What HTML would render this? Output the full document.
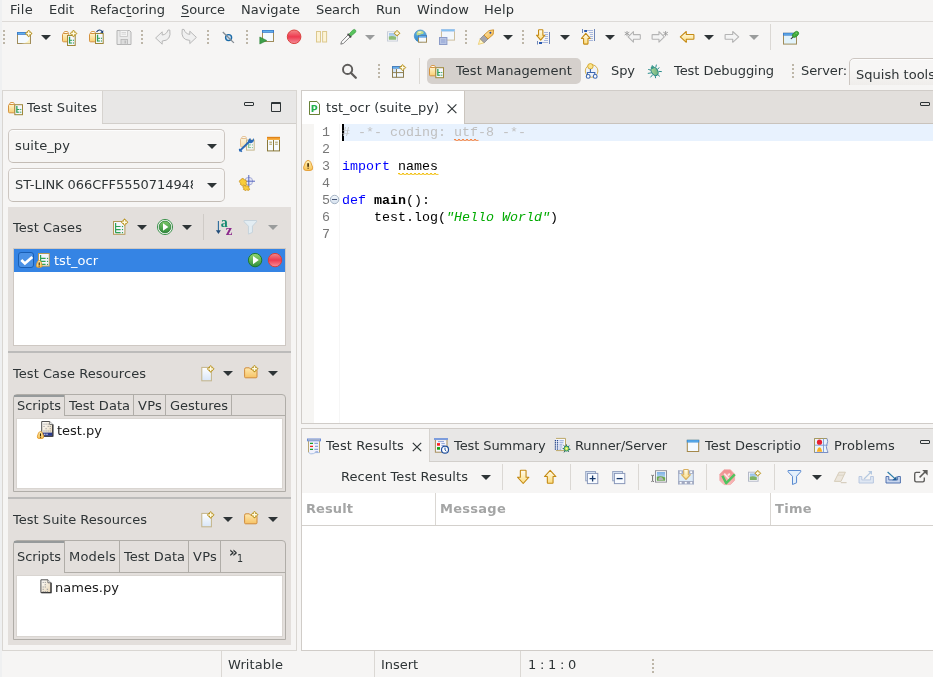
<!DOCTYPE html><html><head>
<meta charset="utf-8">
<title>Squish IDE</title>
<style>
*{box-sizing:border-box;margin:0;padding:0}
html,body{width:933px;height:677px;overflow:hidden;background:#f6f5f4}
body{position:relative;font-family:"DejaVu Sans","Liberation Sans",sans-serif;font-size:13px;color:#2e3436;line-height:16px}
.a{position:absolute}
.t{position:absolute;white-space:nowrap;line-height:16px;height:16px}
.b{font-weight:bold}
svg{position:absolute;overflow:visible}
.ic{position:absolute;width:16px;height:16px}
.mono{font-family:"Liberation Mono","DejaVu Sans Mono",monospace;font-size:13.33px;position:absolute;white-space:pre;line-height:17px;height:17px}
.arr{position:absolute;width:0;height:0;border-left:5px solid transparent;border-right:5px solid transparent;border-top:5px solid #2e3436}
.arr.dis{border-top-color:#9a9c9c}
.dsep{position:absolute;width:2px;background:repeating-linear-gradient(to bottom,#bdb6a8 0,#bdb6a8 2px,transparent 2px,transparent 4px)}
.vsep{position:absolute;width:1px;background:#dbd8d4}
u{text-decoration:underline;text-underline-offset:2px;text-decoration-thickness:1px}
.sec{position:absolute;left:8px;width:283px;background:#e3dfdc}
.tabbar{position:absolute;background:#e8e7e6;border-bottom:1px solid #d2cfcb}
</style>
</head>
<body>
<div id="root" style="position:absolute;left:0;top:0;width:933px;height:677px;will-change:transform">
<!-- MENUBAR -->
<div class="a" id="menubar" style="left:0;top:0;width:933px;height:22px;border-bottom:1px solid #dddad7"></div>
<div class="t" style="left: 10px; top: 2px; letter-spacing: 0.309px;">File</div>
<div class="t" style="left: 49px; top: 2px; letter-spacing: -0.047px;">Edit</div>
<div class="t" style="left: 90px; top: 2px; letter-spacing: 0.031px;">Refac<u>t</u>oring</div>
<div class="t" style="left: 181px; top: 2px; letter-spacing: -0.112px;"><u>S</u>ource</div>
<div class="t" style="left: 241px; top: 2px; letter-spacing: 0.086px;">Navigate</div>
<div class="t" style="left: 316px; top: 2px; letter-spacing: -0.112px;">Search</div>
<div class="t" style="left: 376px; top: 2px; letter-spacing: 0.021px;">Run</div>
<div class="t" style="left: 417px; top: 2px; letter-spacing: 0.122px;">Window</div>
<div class="t" style="left: 484px; top: 2px; letter-spacing: 0.09px;">Help</div>
<div class="a" style="left:0;top:0;width:2px;height:677px;background:#eff0f1"></div>

<!-- TOOLBAR1 -->
<div id="tb1">
<div class="dsep" style="left:3px;top:30px;height:15px"></div>
<div class="arr" style="left:41px;top:35px"></div>
<div class="dsep" style="left:141px;top:30px;height:15px"></div>
<div class="dsep" style="left:207px;top:30px;height:15px"></div>
<div class="dsep" style="left:246px;top:30px;height:15px"></div>
<div class="arr dis" style="left:365px;top:35px"></div>
<div class="dsep" style="left:465px;top:30px;height:15px"></div>
<div class="arr" style="left:503px;top:35px"></div>
<div class="dsep" style="left:522px;top:30px;height:15px"></div>
<div class="arr" style="left:560px;top:35px"></div>
<div class="arr" style="left:605px;top:35px"></div>
<div class="arr" style="left:704px;top:35px"></div>
<div class="arr dis" style="left:749px;top:35px"></div>
<div class="vsep" style="left:770px;top:24px;height:26px"></div>
<svg style="left:16px;top:29px" width="16" height="16" viewBox="0 0 16 16"><rect x="1.5" y="3.5" width="13" height="11" fill="#f4faff" stroke="#a08c5a"></rect><rect x="1" y="3" width="14" height="2.8" fill="#3a7ccc"></rect><rect x="2" y="3.8" width="12" height="1.1" fill="#6cc0f6" opacity=".85"></rect><path d="M14 8 q-1 6 -9 6.5 h9z" fill="#fbedb8" opacity=".9"></path><path d="M12.7 1.0999999999999996 L16.1 4.5 L12.7 7.9 L9.299999999999999 4.5Z" fill="#b8921e" stroke="#b8921e" stroke-width=".6" stroke-linejoin="round"></path><path d="M12.7 2.1999999999999997 V6.800000000000001 M10.399999999999999 4.5 H15.000000000000002" stroke="#fffbe4" stroke-width="1.45" fill="none"></path></svg>
<svg style="left:61px;top:29px" width="16" height="16" viewBox="0 0 16 16"><defs><linearGradient id="g2" x1="0" y1="0" x2="0" y2="1"><stop offset="0" stop-color="#fff3cc"></stop><stop offset="1" stop-color="#f8cf72"></stop></linearGradient></defs><g><path d="M2.5 4.6 L3 3 Q3.2 2.5 3.8 2.5 H6.2 Q6.8 2.5 7 3 L7.4 4.6Z" fill="#fffaf0" stroke="#d4923e" stroke-width=".9" stroke-linejoin="round"></path><rect x="1.5" y="4.5" width="6.200" height="8.300" rx="1" fill="url(#g2)" stroke="#d4923e"></rect><rect x="6.5" y="6.5" width="7.700" height="10" fill="#f6f6fd" stroke="#9e8838"></rect><path d="M8.55 7.7 v6.800" stroke="#2fa256" stroke-width="1.300" fill="none"></path><path d="M8.55 11.3 h2.500 M8.55 14 h2.500" stroke="#2fa256" stroke-width="1" fill="none"></path><rect x="11.9" y="10.75" width="1.100" height="1.100" fill="#2fa256"></rect><rect x="11.9" y="13.45" width="1.100" height="1.100" fill="#2fa256"></rect></g><path d="M12.5 1.0999999999999996 L15.9 4.5 L12.5 7.9 L9.1 4.5Z" fill="#b8921e" stroke="#b8921e" stroke-width=".6" stroke-linejoin="round"></path><path d="M12.5 2.1999999999999997 V6.800000000000001 M10.2 4.5 H14.8" stroke="#fffbe4" stroke-width="1.45" fill="none"></path></svg>
<svg style="left:88px;top:29px" width="16" height="16" viewBox="0 0 16 16"><defs><linearGradient id="g3" x1="0" y1="0" x2="0" y2="1"><stop offset="0" stop-color="#fff3cc"></stop><stop offset="1" stop-color="#f8cf72"></stop></linearGradient></defs><g><path d="M2.5 4.6 L3 3 Q3.2 2.5 3.8 2.5 H6.2 Q6.8 2.5 7 3 L7.4 4.6Z" fill="#fffaf0" stroke="#d4923e" stroke-width=".9" stroke-linejoin="round"></path><rect x="1.5" y="4.5" width="6.200" height="8.300" rx="1" fill="url(#g3)" stroke="#d4923e"></rect><rect x="7.5" y="4.5" width="7.700" height="10" fill="#f6f6fd" stroke="#9e8838"></rect><path d="M9.55 5.7 v6.800" stroke="#2fa256" stroke-width="1.300" fill="none"></path><path d="M9.55 9.3 h2.500 M9.55 12 h2.500" stroke="#2fa256" stroke-width="1" fill="none"></path><rect x="12.9" y="8.75" width="1.100" height="1.100" fill="#2fa256"></rect><rect x="12.9" y="11.45" width="1.100" height="1.100" fill="#2fa256"></rect></g><path d="M8.500 3 q3 -3.800 5.800 -.4" fill="none" stroke="#1c3f78" stroke-width="1.200"></path><path d="M15.400 1.200 l-.3 3 l-2.900 -.6z" fill="#1c3f78"></path></svg>
<svg style="left:116px;top:29px" width="16" height="16" viewBox="0 0 16 16"><path d="M1 1.5 H13.5 L15 3 V15.5 H1Z" fill="#e9e9e9" stroke="#b4b4b4" stroke-linejoin="round"></path><rect x="4" y="1.5" width="7.5" height="6" fill="#f4f4f4" stroke="#c4c4c4" stroke-width=".8"></rect><path d="M5.5 3.5h4.5M5.5 5.2h4.5" stroke="#cfcfcf" stroke-width=".8"></path><rect x="5" y="10.5" width="6.5" height="5" fill="#dcdcdc" stroke="#b4b4b4" stroke-width=".8"></rect><rect x="8.5" y="11.5" width="1.5" height="3" fill="#bdbdbd"></rect></svg>
<svg style="left:155px;top:29px" width="16" height="16" viewBox="0 0 16 16"><path d="M.6 9 L7.2 2.8 V6 Q11.6 5.6 13 1 L14.8 1 Q16.6 11.6 7.2 12 V15.2Z" fill="#f0f0f0" stroke="#b7b7b7" stroke-linejoin="round"></path></svg>
<svg style="left:181px;top:29px" width="16" height="16" viewBox="0 0 16 16"><path d="M15.4 8.4 L8.8 2.2 V5.400 Q4.400 5 3 .4 L1.200 .4 Q-.6 11 8.800 11.400 V14.600Z" fill="#f0f0f0" stroke="#b7b7b7" stroke-linejoin="round"></path></svg>
<svg style="left:220px;top:29px" width="16" height="16" viewBox="0 0 16 16"><circle cx="8.6" cy="8.6" r="3" fill="#cfe2f2" stroke="#1b6aa6" stroke-width="1.400"></circle><path d="M2.8 3 L13.9 13.9" stroke="#848c94" stroke-width="1.300"></path></svg>
<svg style="left:259px;top:29px" width="16" height="16" viewBox="0 0 16 16"><rect x="3.5" y="1.5" width="11" height="11" fill="#f4faff" stroke="#a08c5a"></rect><rect x="3" y="1" width="12" height="2.8" fill="#3a7ccc"></rect><rect x="4" y="1.8" width="10" height="1.1" fill="#6cc0f6" opacity=".85"></rect><path d="M.8 8 V15 L7.8 11.5Z" fill="#3f9f4a" stroke="#2c8438" stroke-width=".6" stroke-linejoin="round"></path></svg>
<svg style="left:286px;top:29px" width="16" height="16" viewBox="0 0 16 16"><defs><linearGradient id="g4" x1="0" y1="0" x2="0" y2="1"><stop offset="0" stop-color="#f28a8a"></stop><stop offset="0.5" stop-color="#ee3a50"></stop><stop offset="1" stop-color="#f4909a"></stop></linearGradient></defs><circle cx="8.1" cy="7.8" r="6.8" fill="url(#g4)" stroke="#d8403c"></circle></svg>
<svg style="left:314px;top:29px" width="16" height="16" viewBox="0 0 16 16"><rect x="2.5" y="2.5" width="4" height="10.5" fill="#fcf3d6" stroke="#dcc88e"></rect><rect x="8.6" y="2.5" width="4" height="10.5" fill="#fcf3d6" stroke="#dcc88e"></rect></svg>
<svg style="left:340px;top:29px" width="16" height="16" viewBox="0 0 16 16"><path d="M.8 15.2 L1.6 12.6 L8.6 5.4 L10.6 7.4 L3.4 14.4Z" fill="#fff" stroke="#5e5e5e" stroke-width=".8" stroke-linejoin="round"></path><path d="M7.6 4.800 L11.200 8.400" stroke="#444" stroke-width="1.500"></path><path d="M9.2 5 L12.6 1.2 Q14.6 -.4 15.6 1.2 Q16.4 2.6 14.8 4 L11 7Z" fill="#58c45c" stroke="#3a9a40" stroke-width=".7"></path></svg>
<svg style="left:386px;top:29px" width="16" height="16" viewBox="0 0 16 16"><defs><linearGradient id="g5" x1="0" y1="0" x2="0" y2="1"><stop offset="0" stop-color="#7cb0e4"></stop><stop offset="1" stop-color="#dcecf6"></stop></linearGradient></defs><g opacity="0.75"><rect x="1.5" y="2.8" width="10" height="9.2" fill="#fff" stroke="#b9bfd0"></rect><rect x="2.8" y="4.1" width="7.4" height="6.6" fill="url(#g5)"></rect><path d="M2.8 10.7 v-3.264 q3.3 -1.224 7.4 0.51 v2.754z" fill="#6aa84a"></path></g><path d="M11 1.2000000000000002 L14.0 4.2 L11 7.2 L8.0 4.2Z" fill="#b8921e" stroke="#b8921e" stroke-width=".6" stroke-linejoin="round"></path><path d="M11 2.3000000000000003 V6.1 M9.1 4.2 H12.9" stroke="#fffbe4" stroke-width="1.45" fill="none"></path></svg>
<svg style="left:413px;top:29px" width="16" height="16" viewBox="0 0 16 16"><defs><linearGradient id="g6" x1="0" y1="0" x2="0" y2="1"><stop offset="0" stop-color="#62b4e4"></stop><stop offset="1" stop-color="#2e86c8"></stop></linearGradient></defs><circle cx="7.300" cy="7" r="6" fill="url(#g6)" stroke="#3a86c4" stroke-width=".7"></circle><path d="M4.500 2.400 q3 -1.600 6 .4 q.8 1.400 -.6 2.200 q-2 -.4 -3 1 q-2.400 1.200 -3.400 -.6 q-.2 -1.800 1 -3z" fill="#bcd88a"></path><path d="M5.200 2.800 q2 -.8 3.600 0 q-1 1.200 -2.400 1.200 q-1.200 .6 -1.200 -1.200z" fill="#f2f2d0"></path><rect x="5.5" y="6.8" width="8" height="6.4" fill="#f4faff" stroke="#a08c5a"></rect><rect x="5" y="6.3" width="9" height="2.2" fill="#3a7ccc"></rect><rect x="6" y="7.1" width="7" height="0.9" fill="#6cc0f6" opacity=".85"></rect></svg>
<svg style="left:439px;top:29px" width="16" height="16" viewBox="0 0 16 16"><rect x="2.5" y="0.5" width="13" height="10.6" fill="#f3f8fc" stroke="#cdbf9e"></rect><rect x="2" y="0" width="14" height="2.6" fill="#a6c6ea"></rect><rect x="3" y="0.8" width="12" height="0.9" fill="#6cc0f6" opacity=".85"></rect><rect x=".5" y="8.5" width="7.4" height="7" fill="#b9c6e4" stroke="#8c9cc8"></rect><rect x="2" y="10" width="4.4" height="4" fill="#a5b4dc"></rect></svg>
<svg style="left:478px;top:29px" width="16" height="16" viewBox="0 0 16 16"><defs><linearGradient id="g7" x1="0" y1="0" x2="1" y2="1"><stop offset="0" stop-color="#ffedb4"></stop><stop offset="1" stop-color="#f4b040"></stop></linearGradient></defs><path d="M.4 15.4 L2.2 9.8 L6.2 13.8Z" fill="#fff7c8" stroke="#e8c050" stroke-width=".7"></path><path d="M2.2 9.8 L6 6 L10 10 L6.2 13.8Z" fill="#a4a4ac" stroke="#7c7c84" stroke-width=".7"></path><path d="M6 6 L11 1.6 L15.6 .8 L15.2 5.4 L10 10Z" fill="url(#g7)" stroke="#c8861a" stroke-width=".8" stroke-linejoin="round"></path><circle cx="12.4" cy="3.8" r="1" fill="#2a4a9a"></circle></svg>
<svg style="left:535px;top:29px" width="16" height="16" viewBox="0 0 16 16"><path d="M9 3.5h4M10 5.5h3M9.5 7.5h3.5M10 9.5h3M9 11.5h4M7 13.5h6" stroke="#a9b8dc" stroke-width="1"></path><path d="M14.5 3v12M2.5 12v3.5" stroke="#6f86b8" stroke-width="1"></path><rect x="4" y="13" width="3" height="2" fill="#2a5ab0"></rect><defs><linearGradient id="g8" x1="0" y1="0" x2="0" y2="1"><stop offset="0" stop-color="#fffdf0"></stop><stop offset="1" stop-color="#fcdc7c"></stop></linearGradient></defs><path d="M5.7 11.200000000000001 L1.5 6.228000000000001 H3.5380000000000003 V1.3 q0 -.5 .5 -.5 H7.362 q.5 0 .5 .5 V6.228000000000001 H9.9Z" fill="url(#g8)" stroke="#c48a14" stroke-width="1.1" stroke-linejoin="round"></path></svg>
<svg style="left:580px;top:29px" width="16" height="16" viewBox="0 0 16 16"><path d="M6 1.5h7M9 3.5h4M10 5.5h3M9.5 7.5h3.5M10 9.5h3M9 11.5h4" stroke="#a9b8dc" stroke-width="1"></path><path d="M14.5 0v12M2.5 0v4" stroke="#6f86b8" stroke-width="1"></path><rect x="4.2" y="1" width="2.8" height="2" fill="#2a5ab0"></rect><defs><linearGradient id="g9" x1="0" y1="0" x2="0" y2="1"><stop offset="0" stop-color="#fffdf0"></stop><stop offset="1" stop-color="#fcdc7c"></stop></linearGradient></defs><path d="M5.8 4.3 L1.5 9.463999999999999 H3.592 V14.600000000000001 q0 .5 .5 .5 H7.507999999999999 q.5 0 .5 -.5 V9.463999999999999 H10.1Z" fill="url(#g9)" stroke="#c48a14" stroke-width="1.1" stroke-linejoin="round"></path></svg>
<svg style="left:624px;top:29px" width="16" height="16" viewBox="0 0 16 16"><path d="M4.1 7.9 L9.450000000000001 2.7 V5.62 H15.8 q.5 0 .5 .5 V9.680000000000001 q0 .5 -.5 .5 H9.450000000000001 V13.100000000000001Z" fill="#f4f4f4" stroke="#b4b4b4" stroke-width="1.1" stroke-linejoin="round"></path><path d="M3 1.9999999999999996v5.2M0.7000000000000002 3.1999999999999997l4.6 2.8M0.7000000000000002 6.0l4.6 -2.8" stroke="#9c9c9c" stroke-width=".9"></path></svg>
<svg style="left:651px;top:29px" width="16" height="16" viewBox="0 0 16 16"><path d="M13.3 7.9 L7.95 2.7 V5.62 H1.6 q-.5 0 -.5 .5 V9.680000000000001 q0 .5 .5 .5 H7.95 V13.100000000000001Z" fill="#f4f4f4" stroke="#b4b4b4" stroke-width="1.1" stroke-linejoin="round"></path><path d="M14.6 1.9999999999999996v5.2M12.3 3.1999999999999997l4.6 2.8M12.3 6.0l4.6 -2.8" stroke="#9c9c9c" stroke-width=".9"></path></svg>
<svg style="left:679px;top:29px" width="16" height="16" viewBox="0 0 16 16"><defs><linearGradient id="g10" x1="0" y1="0" x2="0" y2="1"><stop offset="0" stop-color="#fffdf0"></stop><stop offset="1" stop-color="#fcdc7c"></stop></linearGradient></defs><path d="M1.3 7.9 L7.28 2.5 V5.54 H14.4 q.5 0 .5 .5 V9.760000000000002 q0 .5 -.5 .5 H7.28 V13.3Z" fill="url(#g10)" stroke="#c48a14" stroke-width="1.1" stroke-linejoin="round"></path></svg>
<svg style="left:724px;top:29px" width="16" height="16" viewBox="0 0 16 16"><path d="M14.700000000000001 7.9 L8.72 2.5 V5.54 H1.6 q-.5 0 -.5 .5 V9.760000000000002 q0 .5 .5 .5 H8.72 V13.3Z" fill="#f4f4f4" stroke="#b4b4b4" stroke-width="1.1" stroke-linejoin="round"></path></svg>
<svg style="left:783px;top:29px" width="16" height="16" viewBox="0 0 16 16"><rect x="0.5" y="4.3" width="13" height="10.8" fill="#e2f3fb" stroke="#a08c5a"></rect><rect x="0" y="3.8" width="14" height="2.8" fill="#3a7ccc"></rect><rect x="1" y="4.6" width="12" height="1.1" fill="#6cc0f6" opacity=".85"></rect><path d="M8.200 9.600 L10.200 7.900" stroke="#3a3a3a" stroke-width="1.100" stroke-linecap="round"></path><ellipse cx="12.500" cy="5.400" rx="3.700" ry="2.300" transform="rotate(-40 12.500 5.400)" fill="#3ea63a" stroke="#2f8a2c" stroke-width=".6"></ellipse><circle cx="13.400" cy="4.300" r="1" fill="#6cc85c"></circle><circle cx="11.500" cy="6" r=".9" fill="#58b848"></circle></svg>
</div>
<!-- TOOLBAR2 -->
<div id="tb2">
<div class="dsep" style="left:378px;top:64px;height:15px"></div>
<div class="vsep" style="left:419px;top:58px;height:26px"></div>
<div class="a" style="left:427px;top:58px;width:154px;height:26px;border-radius:5px;background:#d5d0cc"></div>
<div class="t" style="left: 456px; top: 63px; letter-spacing: 0.042px;">Test Management</div>
<div class="t" style="left: 611px; top: 63px; letter-spacing: -0.068px;">Spy</div>
<div class="t" style="left: 674px; top: 63px; letter-spacing: -0.06px;">Test Debugging</div>
<div class="dsep" style="left:792px;top:64px;height:15px"></div>
<div class="t" style="left: 801px; top: 63px; letter-spacing: -0.114px;">Server:</div>
<div class="a" style="left:849px;top:58px;width:100px;height:27px;overflow:hidden"><div class="a" style="left:0;top:0;width:120px;height:36px;border:1px solid #cdc7c2;border-radius:5px;background:linear-gradient(#f7f6f5 30%,#ebe9e6);box-shadow:inset 0 1px #fdfdfd"></div></div>
<div class="t" style="left: 856px; top: 67px; letter-spacing: 0.009px;">Squish tools</div>
<svg style="left:341px;top:63px" width="17" height="17" viewBox="0 0 17 17"><circle cx="6.6" cy="6.4" r="4.6" fill="none" stroke="#5e5c5a" stroke-width="1.9"></circle><path d="M9.8 9.8 L14.8 14.8" stroke="#5e5c5a" stroke-width="2.3" stroke-linecap="round"></path></svg>
<svg style="left:391px;top:63px" width="16" height="16" viewBox="0 0 16 16"><rect x="1.5" y="3.7" width="11" height="10.6" fill="#f0f7fd" stroke="#8c7c4e"></rect><rect x="1" y="3.2" width="12" height="2.4" fill="#3a7ccc"></rect><rect x="2" y="4.0" width="10" height="0.9" fill="#6cc0f6" opacity=".85"></rect><path d="M5.5 6v8.4M1.5 9.6h11" stroke="#8c7c4e" stroke-width="1"></path><rect x="2" y="6" width="3" height="3.1" fill="#cfe2f6"></rect><path d="M11.6 1.3999999999999995 L14.8 4.6 L11.6 7.8 L8.399999999999999 4.6Z" fill="#b8921e" stroke="#b8921e" stroke-width=".6" stroke-linejoin="round"></path><path d="M11.6 2.4999999999999996 V6.699999999999999 M9.499999999999998 4.6 H13.700000000000001" stroke="#fffbe4" stroke-width="1.45" fill="none"></path></svg>
<svg style="left:429px;top:65px" width="16" height="16" viewBox="0 0 16 16"><defs><linearGradient id="g11" x1="0" y1="0" x2="0" y2="1"><stop offset="0" stop-color="#fff3cc"></stop><stop offset="1" stop-color="#f8cf72"></stop></linearGradient></defs><g><path d="M1.5 2.6 L2 1 Q2.2 0.5 2.8 0.5 H5.2 Q5.8 0.5 6 1 L6.4 2.6Z" fill="#fffaf0" stroke="#d4923e" stroke-width=".9" stroke-linejoin="round"></path><rect x="0.5" y="2.5" width="6.200" height="8.300" rx="1" fill="url(#g11)" stroke="#d4923e"></rect><rect x="6.8" y="2.7" width="7.700" height="10" fill="#f6f6fd" stroke="#9e8838"></rect><path d="M8.85 3.9000000000000004 v6.800" stroke="#2fa256" stroke-width="1.300" fill="none"></path><path d="M8.85 7.5 h2.500 M8.85 10.2 h2.500" stroke="#2fa256" stroke-width="1" fill="none"></path><rect x="12.2" y="6.95" width="1.100" height="1.100" fill="#2fa256"></rect><rect x="12.2" y="9.65" width="1.100" height="1.100" fill="#2fa256"></rect></g></svg>
<svg style="left:584px;top:62px" width="16" height="18" viewBox="0 0 16 18"><circle cx="7.6" cy="9" r="6.3" fill="#eef2fa" stroke="#d2aa3e" stroke-width=".9"></circle><circle cx="6.4" cy="4.3" r="2.7" fill="#fbe48a" stroke="#d0a228" stroke-width=".9"></circle><path d="M6.4 7v3.5M3.4 13v-2.5h7.4V13" fill="none" stroke="#3a66b0" stroke-width="1.1"></path><circle cx="4.2" cy="14.4" r="1.9" fill="#fff" stroke="#3a66b0" stroke-width="1.1"></circle><circle cx="11.2" cy="14.4" r="1.9" fill="#fff" stroke="#3a66b0" stroke-width="1.1"></circle></svg>
<svg style="left:647px;top:63px" width="16" height="16" viewBox="0 0 16 16"><defs><linearGradient id="g12" x1="0" y1="0" x2="1" y2="1"><stop offset="0" stop-color="#b8dca0"></stop><stop offset="1" stop-color="#5aa878"></stop></linearGradient></defs><path d="M5 2.2l2 2.4M9.4 1.6l-.6 2.8M1.2 6.4l3.4 1M.8 10.4l3.8-.6M3.4 14.4l2.2-2.6M12.4 4.6l-2 1.6M14.8 8.6l-3.2-.2M12.8 13.4l-2.4-2.2M8.6 15.2l-.4-2.6" stroke="#2a8c8c" stroke-width="1" fill="none"></path><ellipse cx="7.6" cy="8.4" rx="3.1" ry="4.5" transform="rotate(-32 7.6 8.4)" fill="url(#g12)" stroke="#2a8888" stroke-width="1"></ellipse><circle cx="5.3" cy="4.6" r="1.5" fill="#3a9a8a"></circle></svg>
</div>

<!-- LEFT PANEL -->
<div id="left">
<div class="a" style="left:2px;top:90px;width:295px;height:561px;border:1px solid #d9d6d2;background:#f6f5f4"></div>
<div class="tabbar" style="left:102px;top:91px;width:194px;height:33px"></div>
<div class="a" style="left:102px;top:91px;width:1px;height:32px;background:#d6d3cf"></div>
<div class="t" style="left: 27px; top: 100px; letter-spacing: 0.026px;">Test Suites</div>
<!-- min / max -->
<div class="a" style="left:244px;top:102px;width:10px;height:4px;border:1px solid #2e3436;border-radius:1px"></div>
<div class="a" style="left:271px;top:102px;width:10px;height:10px;border:1px solid #2e3436;border-top-width:2px;border-radius:1px"></div>
<!-- combos -->
<div class="a" style="left:8px;top:129px;width:217px;height:34px;border:1px solid #cdc7c2;border-bottom-color:#c3bcb5;border-radius:5px;background:#f6f5f4;box-shadow:inset 0 1px #fdfdfd"></div>
<div class="t" style="left: 15px; top: 138px; letter-spacing: 0.104px;">suite_py</div>
<div class="arr" style="left:207px;top:144px"></div>
<div class="a" style="left:8px;top:168px;width:217px;height:34px;border:1px solid #cdc7c2;border-bottom-color:#c3bcb5;border-radius:5px;background:#f6f5f4;box-shadow:inset 0 1px #fdfdfd"></div>
<div class="a" style="left:15px;top:170px;width:178px;height:30px;overflow:hidden"><div class="t" style="left: 0px; top: 7px; letter-spacing: -0.072px;">ST-LINK 066CFF5550714948</div></div>
<div class="arr" style="left:207px;top:183px"></div>
<!-- Test cases section -->
<div class="sec" style="top:207px;height:144px"></div>
<div class="t" style="left: 13px; top: 220px; letter-spacing: 0.067px;">Test Cases</div>
<div class="arr" style="left:137px;top:225px"></div>
<div class="arr" style="left:182px;top:225px"></div>
<div class="vsep" style="left:203px;top:214px;height:26px;background:#cfcbc7"></div>
<div class="arr dis" style="left:268px;top:225px"></div>
<div class="a" style="left:13px;top:248px;width:273px;height:98px;border:1px solid #cec8c3;background:#fff"></div>
<div class="a" style="left:14px;top:249px;width:271px;height:23px;background:#3584e4"></div>
<div class="a" style="left:18px;top:252px;width:16px;height:16px;border:1px solid #1a5fb4;border-radius:3px;background:#4a91e6"></div>
<svg style="left:18px;top:252px" width="16" height="16" viewBox="0 0 16 16"><path d="M3.3 8 L6.9 11.5 L14.3 4.900" fill="none" stroke="#fff" stroke-width="2.700"></path></svg>
<div class="t" style="left: 54px; top: 253px; color: rgb(255, 255, 255); letter-spacing: 0.011px;">tst_ocr</div>
<!-- sash -->
<div class="a" style="left:8px;top:351px;width:283px;height:2px;background:#bcbbba"></div>
<!-- Test Case Resources -->
<div class="sec" style="top:353px;height:144px"></div>
<div class="t" style="left: 13px; top: 366px; letter-spacing: 0.049px;">Test Case Resources</div>
<div class="arr" style="left:223px;top:371px"></div>
<div class="arr" style="left:268px;top:371px"></div>
<div class="a" style="left:13px;top:394px;width:273px;height:98px;border:1px solid #b0ada8;border-radius:4px 4px 0 0"></div>
<div class="a" style="left:14px;top:415px;width:271px;height:1px;background:#b0ada8"></div>
<div class="a" style="left:14px;top:395px;width:50px;height:2px;background:#969a9b"></div>
<div class="a" style="left:64px;top:395px;width:1px;height:21px;background:#b0ada8"></div>
<div class="a" style="left:133px;top:395px;width:1px;height:21px;background:#b0ada8"></div>
<div class="a" style="left:165px;top:395px;width:1px;height:21px;background:#b0ada8"></div>
<div class="a" style="left:231px;top:395px;width:1px;height:21px;background:#b0ada8"></div>
<div class="a" style="left:14px;top:415px;width:50px;height:1px;background:#e3dfdc"></div>
<div class="t" style="left: 17px; top: 398px; letter-spacing: -0.069px;">Scripts</div>
<div class="t" style="left: 69px; top: 398px; letter-spacing: 0.024px;">Test Data</div>
<div class="t" style="left: 138px; top: 398px; letter-spacing: 0.24px;">VPs</div>
<div class="t" style="left: 170px; top: 398px; letter-spacing: -0.002px;">Gestures</div>
<div class="a" style="left:16px;top:418px;width:267px;height:71px;border:1px solid #d9d5d1;background:#fff"></div>
<div class="t" style="left: 57px; top: 423px; color: rgb(26, 26, 26); letter-spacing: -0.007px;">test.py</div>
<!-- sash -->
<div class="a" style="left:8px;top:497px;width:283px;height:2px;background:#bcbbba"></div>
<!-- Test Suite Resources -->
<div class="sec" style="top:499px;height:146px"></div>
<div class="t" style="left: 13px; top: 512px; letter-spacing: 0.027px;">Test Suite Resources</div>
<div class="arr" style="left:223px;top:517px"></div>
<div class="arr" style="left:268px;top:517px"></div>
<div class="a" style="left:13px;top:540px;width:273px;height:100px;border:1px solid #b0ada8;border-radius:4px 4px 0 0"></div>
<div class="a" style="left:14px;top:572px;width:271px;height:1px;background:#b0ada8"></div>
<div class="a" style="left:14px;top:541px;width:50px;height:2px;background:#969a9b"></div>
<div class="a" style="left:64px;top:541px;width:1px;height:32px;background:#b0ada8"></div>
<div class="a" style="left:119px;top:541px;width:1px;height:32px;background:#b0ada8"></div>
<div class="a" style="left:188px;top:541px;width:1px;height:32px;background:#b0ada8"></div>
<div class="a" style="left:220px;top:541px;width:1px;height:32px;background:#b0ada8"></div>
<div class="a" style="left:14px;top:572px;width:50px;height:1px;background:#e3dfdc"></div>
<div class="t" style="left: 17px; top: 549px; letter-spacing: -0.069px;">Scripts</div>
<div class="t" style="left: 69px; top: 549px; letter-spacing: 0.198px;">Models</div>
<div class="t" style="left: 124px; top: 549px; letter-spacing: 0.024px;">Test Data</div>
<div class="t" style="left: 193px; top: 549px; letter-spacing: 0.24px;">VPs</div>
<div class="t b" style="left: 229px; top: 544px; font-size: 13.5px; letter-spacing: 0.266px;">»</div>
<div class="t" style="left: 237px; top: 551px; font-size: 9.6px; letter-spacing: -0.109px;">1</div>
<div class="a" style="left:16px;top:575px;width:267px;height:62px;border:1px solid #d9d5d1;background:#fff"></div>
<div class="t" style="left: 55px; top: 580px; color: rgb(26, 26, 26); letter-spacing: 0.035px;">names.py</div>
<svg style="left:8px;top:102px" width="16" height="16" viewBox="0 0 16 16"><defs><linearGradient id="g13" x1="0" y1="0" x2="0" y2="1"><stop offset="0" stop-color="#fff3cc"></stop><stop offset="1" stop-color="#f8cf72"></stop></linearGradient></defs><g><path d="M1.5 2.6 L2 1 Q2.2 0.5 2.8 0.5 H5.2 Q5.8 0.5 6 1 L6.4 2.6Z" fill="#fffaf0" stroke="#d4923e" stroke-width=".9" stroke-linejoin="round"></path><rect x="0.5" y="2.5" width="6.200" height="8.300" rx="1" fill="url(#g13)" stroke="#d4923e"></rect><rect x="6.8" y="2.7" width="7.700" height="10" fill="#f6f6fd" stroke="#9e8838"></rect><path d="M8.85 3.9000000000000004 v6.800" stroke="#2fa256" stroke-width="1.300" fill="none"></path><path d="M8.85 7.5 h2.500 M8.85 10.2 h2.500" stroke="#2fa256" stroke-width="1" fill="none"></path><rect x="12.2" y="6.95" width="1.100" height="1.100" fill="#2fa256"></rect><rect x="12.2" y="9.65" width="1.100" height="1.100" fill="#2fa256"></rect></g></svg>
<svg style="left:239px;top:136px" width="16" height="16" viewBox="0 0 16 16"><defs><linearGradient id="g14" x1="0" y1="0" x2="0" y2="1"><stop offset="0" stop-color="#fff3cc"></stop><stop offset="1" stop-color="#f8cf72"></stop></linearGradient></defs><g opacity="0.55"><path d="M2.5 2.6 L3 1 Q3.2 0.5 3.8 0.5 H6.2 Q6.8 0.5 7 1 L7.4 2.6Z" fill="#fffaf0" stroke="#d4923e" stroke-width=".9" stroke-linejoin="round"></path><rect x="1.5" y="2.5" width="6.200" height="8.300" rx="1" fill="url(#g14)" stroke="#d4923e"></rect><rect x="7.5" y="4.1" width="7.700" height="10" fill="#f6f6fd" stroke="#9e8838"></rect><path d="M9.55 5.3 v6.800" stroke="#2fa256" stroke-width="1.300" fill="none"></path><path d="M9.55 8.9 h2.500 M9.55 11.6 h2.500" stroke="#2fa256" stroke-width="1" fill="none"></path><rect x="12.9" y="8.35" width="1.100" height="1.100" fill="#2fa256"></rect><rect x="12.9" y="11.05" width="1.100" height="1.100" fill="#2fa256"></rect></g><path d="M1 14.6 L10.6 5.2" stroke="#2a6ab8" stroke-width="2" stroke-linecap="round"></path><path d="M9.4 6.6 q-1 -3 1.8 -4.6 l.8 2 1.8 -.2 .6 -1.8 q1.6 2.8 -1.2 4.8 q-1.6 .8 -3.8 -.2z" fill="#2a6ab8"></path><path d="M.2 13 l2.6 2.8" stroke="#2a6ab8" stroke-width="1.6"></path></svg>
<svg style="left:266px;top:136px" width="16" height="16" viewBox="0 0 16 16"><defs><linearGradient id="g15" x1="0" y1="0" x2="0" y2="1"><stop offset="0" stop-color="#e8861a"></stop><stop offset="1" stop-color="#fbb84a"></stop></linearGradient></defs><rect x="1.5" y="1.5" width="12" height="13.4" fill="#f7fbff" stroke="#8a7838"></rect><rect x="1" y="1" width="13" height="3" fill="url(#g15)"></rect><path d="M1 1.300h13" stroke="#d87c14" stroke-width=".8"></path><path d="M7.500 4v11" stroke="#8a7838" stroke-width="1"></path><path d="M3.300 6.200h2.700M3.300 8.200h2.700M9.100 6.200h2.700M9.100 8.200h2.700" stroke="#a89858" stroke-width="1"></path></svg>
<svg style="left:239px;top:175px" width="17" height="17" viewBox="0 0 17 17"><circle cx="9.8" cy="6.2" r="3.9" fill="#e6e8f6" stroke="#a0a6d4" stroke-width=".9"></circle><path d="M9.8 0v12.4M4 6.2h12" stroke="#5566c0" stroke-width="1"></path><path d="M.6 5.6 q1.6 -.4 2 -1.8 q1.4 -1 2.4 .4 q.2 1 1.4 .6 l1.4 2 q-1.4 .6 -.6 1.800 q.8 1 -.4 1.800 q-1.200 .6 -1.800 -.4 q-.8 -.4 -1.400 .8 l-2.200 -1.400 q.6 -1.200 -.4 -1.800 q-1 -1 -.4 -2z" fill="#f8cc3c" stroke="#c8921c" stroke-width=".8" stroke-linejoin="round"></path><path d="M4.400 10.800 q1 -.6 1.800 .2 q1 .6 1.600 -.4 l2.200 1 q-.8 1.200 .2 1.800 q.8 .8 0 1.600 q-1 .8 -2 0 q-.6 -.6 -1.400 .6 l-2.400 -1.200 q.8 -1.200 -.2 -1.800 q-.6 -.8 .2 -1.800z" fill="#f8cc3c" stroke="#c8921c" stroke-width=".8" stroke-linejoin="round"></path></svg>
<svg style="left:113px;top:219px" width="16" height="16" viewBox="0 0 16 16"><rect x="0.5" y="2.5" width="11.4" height="12.8" fill="#f5f5fc" stroke="#b49a58"></rect><path d="M2.6 4 v9.8 M2.6 7.5200000000000005 h5 M2.6 10.556000000000001 h5 M2.6 13.592 h5" stroke="#2fa256" stroke-width="1.2" fill="none"></path><rect x="8.9" y="6.920000000000001" width="1.2" height="1.2" fill="#2fa256"></rect><rect x="8.9" y="9.956000000000001" width="1.2" height="1.2" fill="#2fa256"></rect><rect x="8.9" y="12.992" width="1.2" height="1.2" fill="#2fa256"></rect><path d="M11.6 -0.20000000000000018 L15.0 3.2 L11.6 6.6000000000000005 L8.2 3.2Z" fill="#b8921e" stroke="#b8921e" stroke-width=".6" stroke-linejoin="round"></path><path d="M11.6 0.8999999999999999 V5.5 M9.299999999999999 3.2 H13.9" stroke="#fffbe4" stroke-width="1.45" fill="none"></path></svg>
<svg style="left:157px;top:219px" width="16" height="16" viewBox="0 0 16 16"><defs><linearGradient id="g16" x1="0" y1="0" x2="0" y2="1"><stop offset="0" stop-color="#7cc86a"></stop><stop offset="1" stop-color="#2f8a3a"></stop></linearGradient></defs><circle cx="8" cy="8" r="7.6" fill="#fff" stroke="#2e8a3e" stroke-width=".9"></circle><circle cx="8" cy="8" r="5.9" fill="url(#g16)" stroke="#2a7a36" stroke-width=".8"></circle><path d="M6 4.200 V11.800 L11.400 8Z" fill="#fff"></path></svg>
<svg style="left:215px;top:219px" width="18" height="17" viewBox="0 0 18 17"><path d="M3.400 2v11" stroke="#2a6a9a" stroke-width="1.100"></path><path d="M.9 11.300h5L3.400 15z" fill="#234e7a"></path><text x="5.800" y="7.600" font-family="Liberation Serif,DejaVu Serif,serif" font-weight="bold" font-size="14" fill="#168a72">a</text><text x="10.800" y="16" font-family="Liberation Serif,DejaVu Serif,serif" font-weight="bold" font-size="15" fill="#8c2a8c">z</text></svg>
<svg style="left:243px;top:220px" width="16" height="16" viewBox="0 0 16 16"><path d="M1.1 0.5 H13.5 V1.8 L9.444 6.132 V12.399999999999999 L5.4239999999999995 14.1 V6.132 L1.1 1.8Z" fill="#e3edf3" stroke="#c6d3dc" stroke-linejoin="round"></path></svg>
<svg style="left:36px;top:252px" width="16" height="16" viewBox="0 0 16 16"><rect x="2.5" y="1.5" width="10.8" height="12.6" fill="#f5f5fc" stroke="#b49a58"></rect><path d="M4.6 3 v9.6 M4.6 6.44 h5 M4.6 9.432 h5 M4.6 12.424 h5" stroke="#2fa256" stroke-width="1.2" fill="none"></path><rect x="10.9" y="5.840000000000001" width="1.2" height="1.2" fill="#2fa256"></rect><rect x="10.9" y="8.832" width="1.2" height="1.2" fill="#2fa256"></rect><rect x="10.9" y="11.824" width="1.2" height="1.2" fill="#2fa256"></rect><defs><linearGradient id="g17" x1="0" y1="0" x2="0" y2="1"><stop offset="0" stop-color="#fff2b8"></stop><stop offset="1" stop-color="#f8c252"></stop></linearGradient></defs><path d="M3.1999999999999997 8.6 Q4.356 8.6 5.0496 9.934 L6.0 13.256799999999998 Q6.5 15.299999999999999 4.5192 15.299999999999999 H1.8808000000000005 Q-0.1 15.299999999999999 0.39999999999999997 13.256799999999998 L1.3503999999999994 9.934 Q2.0439999999999996 8.6 3.1999999999999997 8.6Z" fill="url(#g17)" stroke="#e29a30" stroke-width=".9" stroke-linejoin="round"></path><path d="M3.1999999999999997 10.783999999999999 v1.672" stroke="#3a2200" stroke-width="1.10" stroke-linecap="round" fill="none"></path><rect x="2.5999999999999996" y="13.52" width="1.2" height="1" fill="#3a2200"></rect></svg>
<svg style="left:248px;top:253px" width="15" height="15" viewBox="0 0 15 15"><defs><linearGradient id="g18" x1="0" y1="0" x2="0" y2="1"><stop offset="0" stop-color="#96d870"></stop><stop offset="1" stop-color="#2f8f3a"></stop></linearGradient></defs><circle cx="7.1" cy="7.1" r="6.7" fill="url(#g18)" stroke="#1c7a30"></circle><path d="M5.0 2.8999999999999995 V11.3 L10.8 7.1Z" fill="#fff"></path></svg>
<svg style="left:268px;top:253px" width="15" height="15" viewBox="0 0 15 15"><defs><linearGradient id="g19" x1="0" y1="0" x2="0" y2="1"><stop offset="0" stop-color="#f28a8a"></stop><stop offset="0.5" stop-color="#ee3a50"></stop><stop offset="1" stop-color="#f4909a"></stop></linearGradient></defs><circle cx="7" cy="7.1" r="6.7" fill="url(#g19)" stroke="#d8403c"></circle></svg>
<svg style="left:201px;top:365px" width="16" height="16" viewBox="0 0 16 16"><defs><linearGradient id="g20" x1="0" y1="0" x2="0" y2="1"><stop offset="0" stop-color="#ffffff"></stop><stop offset="1" stop-color="#d8e6f8"></stop></linearGradient></defs><rect x=".8" y="2.400" width="9.600" height="13.400" fill="url(#g20)" stroke="#c4b488"></rect><path d="M9.7 0.3999999999999999 L13.2 3.9 L9.7 7.4 L6.199999999999999 3.9Z" fill="#b8921e" stroke="#b8921e" stroke-width=".6" stroke-linejoin="round"></path><path d="M9.7 1.5 V6.300000000000001 M7.299999999999999 3.9 H12.1" stroke="#fffbe4" stroke-width="1.45" fill="none"></path></svg>
<svg style="left:244px;top:365px" width="16" height="16" viewBox="0 0 16 16"><defs><linearGradient id="g21" x1="0" y1="0" x2="0" y2="1"><stop offset="0" stop-color="#fee9b0"></stop><stop offset="1" stop-color="#f6c264"></stop></linearGradient></defs><path d="M.6 4.200 q0 -1.400 1.400 -1.400 h3.400 l1.400 1.600 h5.200 q1 0 1 1 v6.400 q0 1 -1 1 h-10.400 q-1 0 -1 -1z" fill="url(#g21)" stroke="#d08c3c" stroke-linejoin="round"></path><path d="M10.5 0.20000000000000018 L14.0 3.7 L10.5 7.2 L7.0 3.7Z" fill="#b8921e" stroke="#b8921e" stroke-width=".6" stroke-linejoin="round"></path><path d="M10.5 1.3000000000000003 V6.1 M8.1 3.7 H12.9" stroke="#fffbe4" stroke-width="1.45" fill="none"></path></svg>
<svg style="left:201px;top:511px" width="16" height="16" viewBox="0 0 16 16"><defs><linearGradient id="g22" x1="0" y1="0" x2="0" y2="1"><stop offset="0" stop-color="#ffffff"></stop><stop offset="1" stop-color="#d8e6f8"></stop></linearGradient></defs><rect x=".8" y="2.400" width="9.600" height="13.400" fill="url(#g22)" stroke="#c4b488"></rect><path d="M9.7 0.3999999999999999 L13.2 3.9 L9.7 7.4 L6.199999999999999 3.9Z" fill="#b8921e" stroke="#b8921e" stroke-width=".6" stroke-linejoin="round"></path><path d="M9.7 1.5 V6.300000000000001 M7.299999999999999 3.9 H12.1" stroke="#fffbe4" stroke-width="1.45" fill="none"></path></svg>
<svg style="left:244px;top:511px" width="16" height="16" viewBox="0 0 16 16"><defs><linearGradient id="g23" x1="0" y1="0" x2="0" y2="1"><stop offset="0" stop-color="#fee9b0"></stop><stop offset="1" stop-color="#f6c264"></stop></linearGradient></defs><path d="M.6 4.200 q0 -1.400 1.400 -1.400 h3.400 l1.400 1.600 h5.200 q1 0 1 1 v6.400 q0 1 -1 1 h-10.400 q-1 0 -1 -1z" fill="url(#g23)" stroke="#d08c3c" stroke-linejoin="round"></path><path d="M10.5 0.20000000000000018 L14.0 3.7 L10.5 7.2 L7.0 3.7Z" fill="#b8921e" stroke="#b8921e" stroke-width=".6" stroke-linejoin="round"></path><path d="M10.5 1.3000000000000003 V6.1 M8.1 3.7 H12.9" stroke="#fffbe4" stroke-width="1.45" fill="none"></path></svg>
<svg style="left:37px;top:420px" width="18" height="20" viewBox="0 0 18 20"><defs><linearGradient id="g24" x1="0" y1="0" x2="1" y2="1"><stop offset="0" stop-color="#ffffff"></stop><stop offset="1" stop-color="#e6d4b4"></stop></linearGradient></defs><path d="M4.7 1.5 H12.7 L15.7 4.5 V16.1 H4.7Z" fill="url(#g24)" stroke="#505050" stroke-linejoin="round"></path><path d="M15.899999999999999 4.5 V16.3 H5.2" fill="none" stroke="#2e2e2e" stroke-width="1.1"></path><path d="M12.7 1.5 V4.5 H15.7" fill="#fff" stroke="#505050" stroke-width=".8" stroke-linejoin="round"></path><rect x="6.4" y="3.6" width="1.2" height="1" fill="#9c9c9c"></rect><rect x="8.5" y="3.6" width="1.2" height="1" fill="#9c9c9c"></rect><rect x="10.6" y="3.6" width="1.2" height="1" fill="#9c9c9c"></rect><rect x="6.4" y="5.9" width="1.2" height="1" fill="#9c9c9c"></rect><rect x="10.6" y="5.9" width="1.2" height="1" fill="#9c9c9c"></rect><rect x="12.7" y="5.9" width="1.2" height="1" fill="#9c9c9c"></rect><rect x="8.5" y="8.2" width="1.2" height="1" fill="#9c9c9c"></rect><rect x="12.7" y="8.2" width="1.2" height="1" fill="#9c9c9c"></rect><rect x="6.4" y="10.5" width="1.2" height="1" fill="#9c9c9c"></rect><rect x="8.5" y="10.5" width="1.2" height="1" fill="#9c9c9c"></rect><rect x="10.6" y="10.5" width="1.2" height="1" fill="#9c9c9c"></rect><rect x="12.7" y="10.5" width="1.2" height="1" fill="#9c9c9c"></rect><rect x="5.2" y="12.600000000000001" width="10" height="3.2" fill="#2b3a8c"></rect><rect x="7.2" y="13.700000000000001" width="1.2" height="1.1" fill="#fff"></rect><rect x="9.4" y="13.700000000000001" width="1.2" height="1.1" fill="#fff"></rect><defs><linearGradient id="g25" x1="0" y1="0" x2="0" y2="1"><stop offset="0" stop-color="#fff2b8"></stop><stop offset="1" stop-color="#f8c252"></stop></linearGradient></defs><path d="M3.5 11.6 Q4.758 11.6 5.5128 13.087 L6.6000000000000005 16.2324 Q7.1000000000000005 18.5 4.935599999999999 18.5 H2.0644000000000005 Q-0.1 18.5 0.39999999999999997 16.2324 L1.4871999999999996 13.087 Q2.242 11.6 3.5 11.6Z" fill="url(#g25)" stroke="#e29a30" stroke-width=".9" stroke-linejoin="round"></path><path d="M3.5 13.852 v1.716" stroke="#3a2200" stroke-width="1.11" stroke-linecap="round" fill="none"></path><rect x="2.9" y="16.66" width="1.2" height="1" fill="#3a2200"></rect></svg>
<svg style="left:40px;top:579px" width="16" height="16" viewBox="0 0 16 16"><defs><linearGradient id="g26" x1="0" y1="0" x2="1" y2="1"><stop offset="0" stop-color="#ffffff"></stop><stop offset="1" stop-color="#e6d4b4"></stop></linearGradient></defs><path d="M0.9 0.8 H7.9 L10.9 3.8 V13.600000000000001 H0.9Z" fill="url(#g26)" stroke="#505050" stroke-linejoin="round"></path><path d="M11.1 3.8 V13.8 H1.4" fill="none" stroke="#2e2e2e" stroke-width="1.1"></path><path d="M7.9 0.8 V3.8 H10.9" fill="#fff" stroke="#505050" stroke-width=".8" stroke-linejoin="round"></path><rect x="2.6" y="2.9" width="1.2" height="1" fill="#9c9c9c"></rect><rect x="4.7" y="2.9" width="1.2" height="1" fill="#9c9c9c"></rect><rect x="4.7" y="5.2" width="1.2" height="1" fill="#9c9c9c"></rect><rect x="2.6" y="7.5" width="1.2" height="1" fill="#9c9c9c"></rect><rect x="4.7" y="7.5" width="1.2" height="1" fill="#9c9c9c"></rect><rect x="2.6" y="9.8" width="1.2" height="1" fill="#9c9c9c"></rect><rect x="6.8" y="9.8" width="1.2" height="1" fill="#9c9c9c"></rect><rect x="2.6" y="12.1" width="1.2" height="1" fill="#9c9c9c"></rect><rect x="4.7" y="12.1" width="1.2" height="1" fill="#9c9c9c"></rect><rect x="6.8" y="12.1" width="1.2" height="1" fill="#9c9c9c"></rect></svg>
</div>

<!-- EDITOR -->
<div id="editor">
<div class="a" style="left:301px;top:90px;width:640px;height:334px;border:1px solid #d0ccc8;background:#fff"></div>
<div class="tabbar" style="left:464px;top:91px;width:469px;height:33px;background:#e2dfdc;border-bottom-color:#c9c3bc"></div>
<div class="a" style="left:464px;top:91px;width:1px;height:32px;background:#cbc5be"></div>
<div class="t" style="left: 326px; top: 100px; letter-spacing: 0.036px;">tst_ocr (suite_py)</div>
<svg style="left:446.500px;top:104px" width="10" height="10" viewBox="0 0 10 10"><path d="M0.600 0.300 L9.400 9.100 M9.400 0.300 L0.600 9.100" stroke="#33393b" stroke-width="1.150" fill="none"></path></svg>
<div class="a" style="left:920px;top:102px;width:10px;height:4px;border:1px solid #2e3436;border-radius:1px"></div>
<!-- ruler -->
<div class="a" style="left:302px;top:124px;width:12px;height:299px;background:#f6f5f3"></div>
<div class="a" style="left:339px;top:124px;width:1px;height:299px;background:#f6f6f6"></div>
<div class="a" style="left:342px;top:124px;width:591px;height:17px;background:#e8f2fe"></div>
<div class="a" style="left:342px;top:124px;width:2px;height:17px;background:#000"></div>
<div class="mono" style="left:322px;top:124px;color:#787878">1</div>
<div class="mono" style="left:322px;top:141px;color:#787878">2</div>
<div class="mono" style="left:322px;top:158px;color:#787878">3</div>
<div class="mono" style="left:322px;top:175px;color:#787878">4</div>
<div class="mono" style="left:322px;top:192px;color:#787878">5</div>
<div class="mono" style="left:322px;top:209px;color:#787878">6</div>
<div class="mono" style="left:322px;top:226px;color:#787878">7</div>
<div class="mono" style="left:342px;top:124px;color:#c0c0c0"># -*- coding: utf-8 -*-</div>
<div class="mono" style="left:342px;top:158px"><span style="color:#0000ff">import</span> <span style="color:#000">names</span></div>
<div class="mono" style="left:342px;top:192px"><span style="color:#0000ff">def</span> <span style="color:#000;font-weight:bold">main</span><span style="color:#000">():</span></div>
<div class="mono" style="left:342px;top:209px"><span style="color:#000">    test.log(</span><span style="color:#00aa00;font-style:italic">"Hello World"</span><span style="color:#000">)</span></div>
<svg style="left:309px;top:101px" width="11" height="14" viewBox="0 0 11 14"><path d="M.5 .5 H7.800 L10.500 3.200 V13.500 H.5Z" fill="#fdfdff" stroke="#5c8a3c" stroke-linejoin="round"></path><path d="M.5 .5 H7.800 L10.500 3.200 V13.500 H.5Z" fill="none" stroke="#8a6a2a" stroke-dasharray="1 1.500" stroke-dashoffset="1" stroke-linejoin="round" opacity=".7"></path><text x="1.700" y="11" font-family="DejaVu Sans,Liberation Sans,sans-serif" font-weight="bold" font-size="9.500" fill="#22b24c">P</text></svg>
<svg style="left:303px;top:160px" width="11" height="11" viewBox="0 0 11 11"><defs><linearGradient id="g27" x1="0" y1="0" x2="0" y2="1"><stop offset="0" stop-color="#fff2b8"></stop><stop offset="1" stop-color="#f8c252"></stop></linearGradient></defs><path d="M5.1 0.4 Q6.834 0.4 7.8744 2.601 L9.6 7.1852 Q10.1 10.5 7.078799999999999 10.5 H3.1212 Q0.1 10.5 0.6 7.1852 L2.3255999999999997 2.601 Q3.3659999999999997 0.4 5.1 0.4Z" fill="url(#g27)" stroke="#e29a30" stroke-width=".9" stroke-linejoin="round"></path><path d="M5.1 3.74 v2.42" stroke="#3a2200" stroke-width="1.53" stroke-linecap="round" fill="none"></path><rect x="4.5" y="7.699999999999999" width="1.2" height="1" fill="#3a2200"></rect></svg>
<svg style="left:330px;top:195px" width="9" height="9" viewBox="0 0 9 9"><defs><linearGradient id="g28" x1="0" y1="0" x2="0" y2="1"><stop offset="0" stop-color="#f4f8fc"></stop><stop offset="1" stop-color="#d4e0ee"></stop></linearGradient></defs><circle cx="4.600" cy="4.500" r="4.200" fill="url(#g28)" stroke="#9cabbd" stroke-width=".9"></circle><path d="M2 4.500h5" stroke="#465678" stroke-width="1"></path></svg>
<svg style="left:454px;top:139px" width="24" height="2" viewBox="0 0 24 2"><rect x="0" y="0" width="2" height="1.2" fill="#f58646"></rect><rect x="1.5" y=".9" width="3" height="1.1" fill="#f58646" opacity=".85"></rect><rect x="4" y="0" width="2" height="1.2" fill="#f58646"></rect><rect x="5.5" y=".9" width="3" height="1.1" fill="#f58646" opacity=".85"></rect><rect x="8" y="0" width="2" height="1.2" fill="#f58646"></rect><rect x="9.5" y=".9" width="3" height="1.1" fill="#f58646" opacity=".85"></rect><rect x="12" y="0" width="2" height="1.2" fill="#f58646"></rect><rect x="13.5" y=".9" width="3" height="1.1" fill="#f58646" opacity=".85"></rect><rect x="16" y="0" width="2" height="1.2" fill="#f58646"></rect><rect x="17.5" y=".9" width="3" height="1.1" fill="#f58646" opacity=".85"></rect><rect x="20" y="0" width="2" height="1.2" fill="#f58646"></rect><rect x="21.5" y=".9" width="3" height="1.1" fill="#f58646" opacity=".85"></rect></svg>
<svg style="left:398px;top:172.5px" width="40" height="2" viewBox="0 0 40 2"><rect x="0" y="0" width="2" height="1.2" fill="#f2c21a"></rect><rect x="1.5" y=".9" width="3" height="1.1" fill="#f2c21a" opacity=".85"></rect><rect x="4" y="0" width="2" height="1.2" fill="#f2c21a"></rect><rect x="5.5" y=".9" width="3" height="1.1" fill="#f2c21a" opacity=".85"></rect><rect x="8" y="0" width="2" height="1.2" fill="#f2c21a"></rect><rect x="9.5" y=".9" width="3" height="1.1" fill="#f2c21a" opacity=".85"></rect><rect x="12" y="0" width="2" height="1.2" fill="#f2c21a"></rect><rect x="13.5" y=".9" width="3" height="1.1" fill="#f2c21a" opacity=".85"></rect><rect x="16" y="0" width="2" height="1.2" fill="#f2c21a"></rect><rect x="17.5" y=".9" width="3" height="1.1" fill="#f2c21a" opacity=".85"></rect><rect x="20" y="0" width="2" height="1.2" fill="#f2c21a"></rect><rect x="21.5" y=".9" width="3" height="1.1" fill="#f2c21a" opacity=".85"></rect><rect x="24" y="0" width="2" height="1.2" fill="#f2c21a"></rect><rect x="25.5" y=".9" width="3" height="1.1" fill="#f2c21a" opacity=".85"></rect><rect x="28" y="0" width="2" height="1.2" fill="#f2c21a"></rect><rect x="29.5" y=".9" width="3" height="1.1" fill="#f2c21a" opacity=".85"></rect><rect x="32" y="0" width="2" height="1.2" fill="#f2c21a"></rect><rect x="33.5" y=".9" width="3" height="1.1" fill="#f2c21a" opacity=".85"></rect><rect x="36" y="0" width="2" height="1.2" fill="#f2c21a"></rect><rect x="37.5" y=".9" width="3" height="1.1" fill="#f2c21a" opacity=".85"></rect></svg>
</div>

<!-- BOTTOM -->
<div id="bottom">
<div class="a" style="left:301px;top:428px;width:640px;height:223px;border:1px solid #d0ccc8;background:#fff"></div>
<div class="a" style="left:302px;top:429px;width:631px;height:64px;background:#f6f5f4"></div>
<div class="tabbar" style="left:429px;top:429px;width:504px;height:33px"></div>
<div class="a" style="left:429px;top:429px;width:1px;height:32px;background:#d6d3cf"></div>
<div class="t" style="left: 326px; top: 438px; letter-spacing: 0.109px;">Test Results</div>
<svg style="left:412px;top:442px" width="10" height="10" viewBox="0 0 10 10"><path d="M0.8 0.8 L9.2 9.2 M9.2 0.8 L0.8 9.2" stroke="#2e3436" stroke-width="1.2" fill="none"></path></svg>
<div class="t" style="left: 454px; top: 438px; letter-spacing: -0.089px;">Test Summary</div>
<div class="t" style="left: 575px; top: 438px; letter-spacing: -0.118px;">Runner/Server</div>
<div class="t" style="left: 705px; top: 438px; letter-spacing: 0.03px;">Test Descriptio</div>
<div class="t" style="left: 834px; top: 438px; letter-spacing: 0.135px;">Problems</div>
<div class="a" style="left:920px;top:440px;width:10px;height:4px;border:1px solid #2e3436;border-radius:1px"></div>
<div class="t" style="left: 341px; top: 469px; letter-spacing: 0.067px;">Recent Test Results</div>
<div class="arr" style="left:481px;top:475px"></div>
<div class="vsep" style="left:502px;top:464px;height:26px"></div>
<div class="vsep" style="left:570px;top:464px;height:26px"></div>
<div class="vsep" style="left:638px;top:464px;height:26px"></div>
<div class="vsep" style="left:706px;top:464px;height:26px"></div>
<div class="vsep" style="left:774px;top:464px;height:26px"></div>
<div class="arr" style="left:812px;top:475px"></div>
<div class="a" style="left:302px;top:493px;width:631px;height:33px;background:#fff;border-bottom:1px solid #d3d0cc"></div>
<div class="a" style="left:435px;top:493px;width:1px;height:32px;background:#dad7d3"></div>
<div class="a" style="left:770px;top:493px;width:1px;height:32px;background:#dad7d3"></div>
<div class="t b" style="left: 306px; top: 501px; color: rgb(164, 165, 165); letter-spacing: 0.083px;">Result</div>
<div class="t b" style="left: 440px; top: 501px; color: rgb(164, 165, 165); letter-spacing: 0.268px;">Message</div>
<div class="t b" style="left: 775px; top: 501px; color: rgb(164, 165, 165); letter-spacing: 0.328px;">Time</div>
<svg style="left:307px;top:437.5px" width="14" height="17" viewBox="0 0 14 17"><path d="M1.500 3 V14.400 q2 2.400 5 1.200 q1.600 -1.400 3 -1 h3 V3z" fill="#f1f2fb" stroke="none"></path><path d="M1.500 3V14.400 M12.500 3V14.800" stroke="#b8a672" stroke-width="1"></path><path d="M1.500 14.400 q2 2.400 5 1.200 q1.600 -1.400 3 -1 h3" fill="none" stroke="#a9c0e6" stroke-width="1"></path><rect x=".5" y="1" width="13" height="1.800" fill="#d9d5cb" stroke="#6c8cd4" stroke-width="1"></rect><path d="M3 5.400h3M3 11.400h3" stroke="#18a028" stroke-width="1.300"></path><path d="M3 8.400h3" stroke="#f02020" stroke-width="1.300"></path><path d="M7.400 5.400h3.600M8 8.400h3M7.400 11.400h3.600M8.400 13.900h2.600" stroke="#8ea4d8" stroke-width="1.100"></path></svg>
<svg style="left:434px;top:437px" width="15" height="17" viewBox="0 0 15 17"><rect x="1.400" y="2.600" width="11.600" height="12.600" fill="#f4f4fc" stroke="#a68e5a"></rect><rect x="0" y="1" width="14" height="2" fill="#7c9cdc"></rect><rect x="3" y="6.100" width="3" height="2.600" fill="#ff2020"></rect><rect x="3" y="10.100" width="3" height="2.600" fill="#12a012"></rect><path d="M4 4.600h6M7.400 6.600h3.400M7.400 8.600h3" stroke="#8ea4d8" stroke-width="1"></path><circle cx="11" cy="12.700" r="3.500" fill="#fff" stroke="#1e4e9c" stroke-width="1.200"></circle><path d="M11 10.600v2.300l1.400 1.300" fill="none" stroke="#1e4e9c" stroke-width="1"></path></svg>
<svg style="left:554px;top:437px" width="17" height="17" viewBox="0 0 17 17"><path d="M2 1.400 H11.500 V13.600 H2" fill="#f6f7fd" stroke="#bca868" stroke-width="1"></path><g fill="#24468c"><rect x=".8" y="3" width="1.300" height="1.300"></rect><rect x="2.900" y="3" width="1.300" height="1.300"></rect><rect x=".8" y="5.100" width="1.300" height="1.300"></rect><rect x="2.900" y="5.100" width="1.300" height="1.300"></rect><rect x=".8" y="7.200" width="1.300" height="1.300"></rect><rect x="2.900" y="7.200" width="1.300" height="1.300"></rect><rect x=".8" y="9.300" width="1.300" height="1.300"></rect><rect x="2.900" y="9.300" width="1.300" height="1.300"></rect><rect x=".8" y="11.400" width="1.300" height="1.300"></rect><rect x="2.900" y="11.400" width="1.300" height="1.300"></rect></g><path d="M5.400 3.700h4.400M5.400 5.800h4M5.400 7.900h3M5.400 10h3M5.400 12.100h2" stroke="#8ea4d8" stroke-width="1.100"></path><path d="M9.400 8.200l2 1.800M15.400 8.800l-2 1.400M8.600 11.600h2.400M16.400 12.400h-2.400M10 15.400l1.400-2M14.800 14.800l-1.400-1.600M12.400 7.400v2" stroke="#1c4a4a" stroke-width=".9"></path><circle cx="12.500" cy="11.600" r="2.500" fill="#c4e43c" stroke="#1e8a7a" stroke-width="1"></circle><circle cx="12.500" cy="11.600" r=".9" fill="#f4f8c0"></circle></svg>
<svg style="left:686px;top:439px" width="14" height="14" viewBox="0 0 14 14"><rect x="1.3" y="1.3" width="11.4" height="11.2" fill="#f4faff" stroke="#a4884a"></rect><rect x="0.8" y="0.8" width="12.4" height="2.7" fill="#3d8fd8"></rect><rect x="1.8" y="1.6" width="10.4" height="1.0" fill="#6cc0f6" opacity=".85"></rect></svg>
<svg style="left:814px;top:438px" width="15" height="15" viewBox="0 0 15 15"><path d="M.5 .5 H13 q1.400 3 0 5.500 q-1.200 2.600 -.2 5 q.6 1.600 1.200 3.500 H.5Z" fill="#e9f4fc" stroke="#7a8ec4" stroke-width="1"></path><path d="M.5 14.500V.5H12.500" fill="none" stroke="#a89a5c" stroke-width="1"></path><path d="M9.500 .5v14M.5 7.200h13" stroke="#7c9ad4" stroke-width=".9"></path><circle cx="5.500" cy="4.200" r="2.600" fill="#e82030"></circle><path d="M5.500 9.200 q1.200 0 1.800 1.600 l1 3 h-5.600 l1 -3 q.6 -1.600 1.800 -1.600z" fill="#fbb020"></path></svg>
<svg style="left:516px;top:469px" width="16" height="16" viewBox="0 0 16 16"><defs><linearGradient id="g29" x1="0" y1="0" x2="0" y2="1"><stop offset="0" stop-color="#fffdf0"></stop><stop offset="1" stop-color="#fcdc7c"></stop></linearGradient></defs><path d="M7.2 14.5 L1.5 8.184 H4.348000000000001 V1.8 q0 -.5 .5 -.5 H9.552 q.5 0 .5 .5 V8.184 H12.9Z" fill="url(#g29)" stroke="#c48a14" stroke-width="1.1" stroke-linejoin="round"></path></svg>
<svg style="left:543px;top:469px" width="16" height="16" viewBox="0 0 16 16"><defs><linearGradient id="g30" x1="0" y1="0" x2="0" y2="1"><stop offset="0" stop-color="#fffdf0"></stop><stop offset="1" stop-color="#fcdc7c"></stop></linearGradient></defs><path d="M7.2 1.3 L1.5 7.52 H4.348000000000001 V13.8 q0 .5 .5 .5 H9.552 q.5 0 .5 -.5 V7.52 H12.9Z" fill="url(#g30)" stroke="#c48a14" stroke-width="1.1" stroke-linejoin="round"></path></svg>
<svg style="left:585px;top:470px" width="16" height="16" viewBox="0 0 16 16"><rect x=".7" y="1.500" width="9.800" height="9.300" fill="#dce8f6" stroke="#98a6c4"></rect><rect x="2.400" y="3.400" width="10.400" height="10.200" fill="#f8fbff" stroke="#8a98ba"></rect><path d="M7.600 5.600v6M4.600 8.600h6" stroke="#16386c" stroke-width="1.300"></path></svg>
<svg style="left:612px;top:470px" width="16" height="16" viewBox="0 0 16 16"><rect x=".7" y="1.500" width="9.800" height="9.300" fill="#dce8f6" stroke="#98a6c4"></rect><rect x="2.400" y="3.400" width="10.400" height="10.200" fill="#f8fbff" stroke="#8a98ba"></rect><path d="M4.600 8.600h6" stroke="#16386c" stroke-width="1.300"></path></svg>
<svg style="left:650px;top:469px" width="18" height="16" viewBox="0 0 18 16"><path d="M1.400 6.200q1 0 1.200 .8 q.2 -.8 1.200 -.8M2.600 7v4.800M1.400 12.600q1 0 1.200 -.8 q.2 .8 1.200 .8" fill="none" stroke="#4a4a4a" stroke-width=".8"></path><defs><linearGradient id="g31" x1="0" y1="0" x2="0" y2="1"><stop offset="0" stop-color="#7cb0e4"></stop><stop offset="1" stop-color="#dcecf6"></stop></linearGradient></defs><g opacity="1"><rect x="5.5" y="1.7" width="11" height="11.4" fill="#fff" stroke="#8e8e96"></rect><rect x="6.8" y="3.0" width="8.4" height="8.8" fill="url(#g31)"></rect><path d="M6.8 11.799999999999999 v-3.9680000000000004 q3.5999999999999996 -1.488 8.4 0.6200000000000001 v3.3480000000000003z" fill="#6aa84a"></path></g><path d="M8.400 9.400 q2 -2.400 4 -.6 l1.400 2.400 h-5.400z" fill="#b4b4b4"></path></svg>
<svg style="left:678px;top:469px" width="16" height="16" viewBox="0 0 16 16"><rect x=".2" y="1.400" width="15.600" height="14" fill="#dcebf8"></rect><rect x=".2" y="1.400" width="15.600" height="3.400" fill="#a2aac2"></rect><rect x=".2" y="12" width="15.600" height="3.400" fill="#a2aac2"></rect><g fill="#fff"><rect x="1.600" y="2.300" width="2" height="1.700"></rect><rect x="6.800" y="2.300" width="2" height="1.700"></rect><rect x="12.200" y="2.300" width="2" height="1.700"></rect><rect x="1.600" y="12.900" width="2" height="1.700"></rect><rect x="6.800" y="12.900" width="2" height="1.700"></rect><rect x="12.200" y="12.900" width="2" height="1.700"></rect></g><path d="M.7 1.400v14M15.300 1.400v14" stroke="#a2aac2" stroke-width="1"></path><defs><linearGradient id="g32" x1="0" y1="0" x2="0" y2="1"><stop offset="0" stop-color="#fffdf0"></stop><stop offset="1" stop-color="#fcdc7c"></stop></linearGradient></defs><path d="M8.0 10.5 L3.5 5.720000000000001 H5.7 V1 q0 -.5 .5 -.5 H9.8 q.5 0 .5 .5 V5.720000000000001 H12.5Z" fill="url(#g32)" stroke="#d8b060" stroke-width="1.1" stroke-linejoin="round"></path></svg>
<svg style="left:719px;top:469px" width="16" height="16" viewBox="0 0 16 16"><defs><linearGradient id="g33" x1="0" y1="0" x2="0" y2="1"><stop offset="0" stop-color="#f08c8c"></stop><stop offset="1" stop-color="#f8bcbc"></stop></linearGradient></defs><path d="M5 .8h6.400l4.200 4.400v6.200l-4.200 4.200H5L.8 11.400V5.200z" fill="url(#g33)" stroke="#f0a8a8" stroke-width=".8"></path><path d="M5.200 4.600l5.600 6M10.800 4.600l-2 2" stroke="#fde4e4" stroke-width="1.800"></path><path d="M3.400 6.800 L7.200 14.200 L15.800 5.400" fill="none" stroke="#4ec45e" stroke-width="2.500" stroke-linejoin="round"></path></svg>
<svg style="left:747px;top:470px" width="16" height="16" viewBox="0 0 16 16"><defs><linearGradient id="g34" x1="0" y1="0" x2="0" y2="1"><stop offset="0" stop-color="#7cb0e4"></stop><stop offset="1" stop-color="#dcecf6"></stop></linearGradient></defs><g opacity="0.85"><rect x="1.5" y="2.2" width="9.6" height="9" fill="#fff" stroke="#a8aec0"></rect><rect x="2.8" y="3.5" width="7.0" height="6.4" fill="url(#g34)"></rect><path d="M2.8 9.899999999999999 v-3.2 q3.1799999999999997 -1.2 7.0 0.5 v2.7z" fill="#6aa84a"></path></g><path d="M10.8 0.2999999999999998 L13.8 3.3 L10.8 6.3 L7.800000000000001 3.3Z" fill="#b8921e" stroke="#b8921e" stroke-width=".6" stroke-linejoin="round"></path><path d="M10.8 1.4 V5.199999999999999 M8.9 3.3 H12.700000000000001" stroke="#fffbe4" stroke-width="1.45" fill="none"></path></svg>
<svg style="left:787px;top:470px" width="16" height="16" viewBox="0 0 16 16"><path d="M1.1 0.5 H13.7 V1.8 L9.576 6.3 V12.8 L5.4959999999999996 14.5 V6.3 L1.1 1.8Z" fill="#e4f0fb" stroke="#5a8ad0" stroke-linejoin="round"></path></svg>
<svg style="left:833px;top:471px" width="14" height="13" viewBox="0 0 14 13"><path d="M1.400 10.400 L6 1.200 H12.400 L8 10.400Z" fill="#ece6dc" stroke="#d2c8b4" stroke-width=".9" stroke-linejoin="round"></path><path d="M4.600 4.200h6.400" stroke="#d8d0c0" stroke-width=".8"></path><path d="M7.800 11.700h5.800" stroke="#cfc6b4" stroke-width="1"></path></svg>
<svg style="left:858px;top:470px" width="16" height="14" viewBox="0 0 16 14"><path d="M1 6.500V13h14.400V6.500h-2.800v3.400H3.800V6.500z" fill="#dfe7f3" stroke="#b4c4de" stroke-width=".9" stroke-linejoin="round"></path><path d="M6 9 L13.200 1.800" stroke="#b4c8e0" stroke-width="1.200"></path><path d="M10 1h4v4z" fill="#b4c8e0"></path></svg>
<svg style="left:885px;top:470px" width="16" height="14" viewBox="0 0 16 14"><path d="M1 6.500V13h14.400V6.500h-2.800v3.400H3.800V6.500z" fill="#c8d6ee" stroke="#4468a8" stroke-width=".9" stroke-linejoin="round"></path><path d="M2.600 2 L10 8.600" stroke="#2a7aa8" stroke-width="1.200"></path><path d="M11.600 10.200h-4.400l4.400-4z" fill="#1e5e96"></path></svg>
<svg style="left:913px;top:469px" width="16" height="14" viewBox="0 0 16 14"><path d="M7.200 3.400H3.200q-1.500 0-1.500 1.500v6.400q0 1.500 1.500 1.500h6.600q1.500 0 1.500-1.500V8.400" fill="none" stroke="#5c5b59" stroke-width="1.350"></path><path d="M6.600 8.400 L13 2" stroke="#5c5b59" stroke-width="1.500"></path><path d="M9.200 1h5.400v5.400z" fill="#5c5b59"></path></svg>
</div>

<!-- STATUS -->
<div id="status">
<div class="vsep" style="left:221px;top:651px;height:26px"></div>
<div class="vsep" style="left:374px;top:651px;height:26px"></div>
<div class="vsep" style="left:520px;top:651px;height:26px"></div>
<div class="t" style="left: 228px; top: 657px; letter-spacing: 0.105px;">Writable</div>
<div class="t" style="left: 381px; top: 657px; letter-spacing: -0.049px;">Insert</div>
<div class="t" style="left: 528px; top: 657px; letter-spacing: -0.234px;">1 : 1 : 0</div>
<div class="dsep" style="left:652px;top:659px;height:14px"></div>
</div>
</div>


</body></html>
